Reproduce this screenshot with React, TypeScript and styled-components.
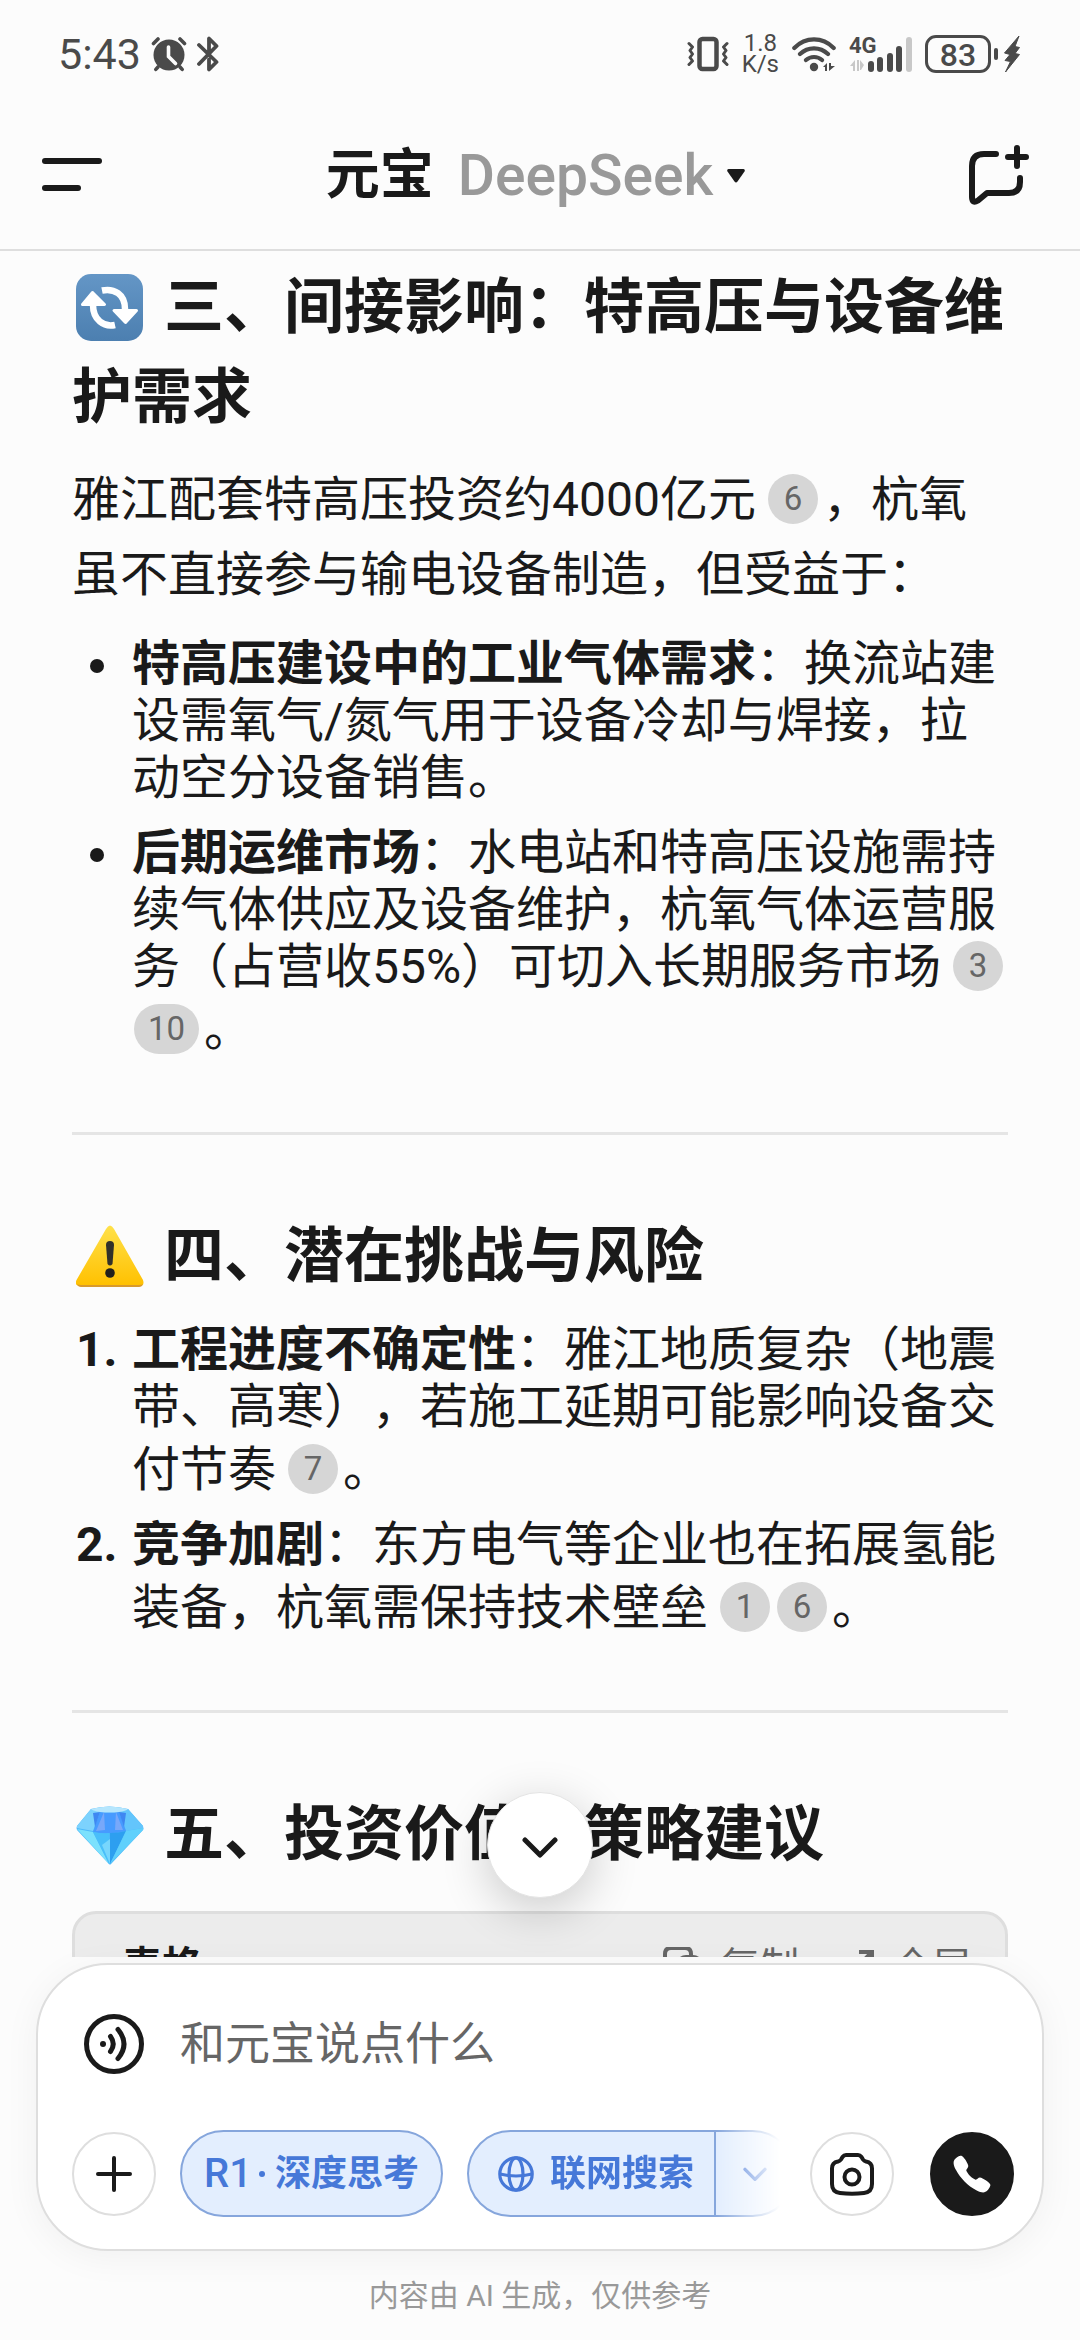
import React from 'react';
import styled, { createGlobalStyle, css } from 'styled-components';
import { IoCall } from 'react-icons/io5';

const ink = '#1a1a1a';
const statusInk = '#4a4a4a';
const blue = '#4678d8';
const fontStack = "Roboto, 'Noto Sans CJK SC', sans-serif";

const GlobalStyle = createGlobalStyle`
  * { box-sizing: border-box; }
  body {
    margin: 0;
    background: #fcfcfc;
    color: ${ink};
    font-family: ${fontStack};
    text-spacing-trim: space-all;
  }
  button, input { font-family: inherit; color: inherit; }
  button { padding: 0; border: 0; background: none; cursor: pointer; }
  svg { display: block; flex: none; }
`;

const Screen = styled.div`
  display: flex;
  flex-direction: column;
  height: 100vh;
  overflow: hidden;
`;

/* ---------- status bar ---------- */

const StatusBar = styled.div`
  display: flex;
  justify-content: space-between;
  align-items: center;
  flex: none;
  height: 100px;
  padding: 8px 60px 0 58px;
  color: ${statusInk};
`;

const StatusGroup = styled.div<{ $gap: number }>`
  display: flex;
  align-items: center;
  gap: ${(p) => p.$gap}px;
`;

const Clock = styled.time`
  font-size: 43px;
  line-height: 48px;
`;

const Speed = styled.div`
  font-size: 24px;
  line-height: 21px;
  text-align: center;
`;

const Cellular = styled.div`
  position: relative;
  width: 63px;
  height: 36px;
`;

const NetworkType = styled.span`
  position: absolute;
  top: 0;
  left: 0;
  font-size: 22px;
  font-weight: 700;
  line-height: 20px;
`;

const Battery = styled.div`
  display: flex;
  align-items: center;
  gap: 3px;
  &::after {
    content: '';
    width: 4px;
    height: 12px;
    border-radius: 2px;
    background: ${statusInk};
  }
`;

const BatteryLevel = styled.span`
  width: 66px;
  height: 38px;
  border: 3px solid ${statusInk};
  border-radius: 11px;
  font-size: 32px;
  font-weight: 500;
  line-height: 34px;
  text-align: center;
`;

/* ---------- header ---------- */

const Header = styled.header`
  display: flex;
  align-items: center;
  justify-content: space-between;
  flex: none;
  height: 151px;
  padding: 0 51px 0 42px;
  border-bottom: 2px solid #dedede;
`;

const IconButton = styled.button`
  display: grid;
  place-items: center;
  flex: none;
  width: 60px;
  height: 60px;
`;

const ModelPicker = styled.button`
  display: flex;
  align-items: center;
  padding-top: 3px;
  font-size: 54px;
  line-height: 72px;
`;

const Brand = styled.span`
  font-weight: 700;
`;

const Model = styled.span`
  margin: 0 14px 0 24px;
  color: #999;
  font-size: 57px;
  font-weight: 500;
`;

/* ---------- answer ---------- */

const Viewport = styled.div`
  position: relative;
  flex: 1;
  min-height: 0;
`;

const Answer = styled.main`
  height: 100%;
  overflow: hidden;
  padding: 12px 72px 0;
`;

const Heading = styled.h2`
  margin: 0;
  font-size: 60px;
  font-weight: 700;
  line-height: 90px;
`;

const Emoji = styled.span`
  display: inline-block;
  width: 68px;
  height: 68px;
  margin: 0 20px 0 4px;
  vertical-align: -14px;
`;

const Paragraph = styled.p`
  margin: 19px 0 23px;
  font-size: 48px;
  line-height: 75px;
`;

const listStyles = css`
  display: flex;
  flex-direction: column;
  gap: 18px;
  margin: 0;
  padding: 0;
  list-style: none;
  font-size: 48px;
  line-height: 57px;
`;

const BulletList = styled.ul`
  ${listStyles}
`;

const NumberList = styled.ol`
  ${listStyles}
  margin-top: 19px;
`;

const Item = styled.li`
  display: grid;
  grid-template-columns: 60px 1fr;
`;

const Bullet = styled.span`
  width: 14px;
  height: 14px;
  margin: 24px 0 0 18px;
  border-radius: 50%;
  background: ${ink};
`;

const Marker = styled.span`
  padding-left: 4px;
  font-weight: 700;
`;

const Rule = styled.hr`
  height: 3px;
  margin: 74px 0 77px;
  border: 0;
  background: #e5e5e5;
`;

const Cite = styled.button<{ $first?: boolean; $tight?: boolean }>`
  min-width: 50px;
  height: 50px;
  margin: ${(p) => (p.$tight ? 0 : 9)}px ${(p) => (p.$tight ? 3 : 5)}px 0 ${(p) => (p.$first ? 12 : 2)}px;
  padding: 0 14px;
  border-radius: 25px;
  background: #d6d6d6;
  color: #666;
  font-size: 33px;
  line-height: 50px;
  vertical-align: 6px;
`;

const TableCard = styled.section`
  margin-top: 31px;
  border: 3px solid #dedede;
  border-radius: 24px;
  background: #ececec;
`;

const TableBar = styled.div`
  display: flex;
  align-items: center;
  gap: 38px;
  height: 106px;
  padding: 0 34px 0 47px;
`;

const TableTitle = styled.strong`
  flex: 1;
  font-size: 40px;
  line-height: 60px;
`;

const TableAction = styled.button`
  display: flex;
  align-items: center;
  gap: 18px;
  color: #666;
  font-size: 39px;
  line-height: 60px;
`;

const ScrollDown = styled.button`
  position: absolute;
  bottom: 59px;
  left: 50%;
  display: grid;
  place-items: center;
  width: 106px;
  height: 106px;
  margin-left: -53px;
  padding-top: 4px;
  border: 1px solid #e4e4e4;
  border-radius: 50%;
  background: #fff;
  box-shadow: 0 12px 48px rgba(0, 0, 0, 0.2);
`;

/* ---------- composer ---------- */

const Dock = styled.footer`
  position: relative;
  flex: none;
  padding: 6px 36px 0;
  background: #fcfcfc;
`;

const Composer = styled.form`
  padding: 49px 28px 32px 34px;
  border: 2px solid #dedede;
  border-radius: 72px;
  background: #fff;
  box-shadow: 0 6px 36px rgba(0, 0, 0, 0.05);
`;

const InputRow = styled.div`
  display: flex;
  align-items: center;
  gap: 36px;
  height: 60px;
  margin: 0 0 56px 12px;
`;

const MessageInput = styled.input`
  flex: 1;
  min-width: 0;
  height: 60px;
  padding: 0;
  border: 0;
  outline: 0;
  background: none;
  font-size: 45px;
  &::placeholder { color: #666; opacity: 1; }
`;

const ToolRow = styled.div`
  display: flex;
  align-items: center;
`;

const RoundButton = styled.button<{ $dark?: boolean }>`
  display: grid;
  place-items: center;
  flex: none;
  width: 84px;
  height: 84px;
  border: 2px solid ${(p) => (p.$dark ? ink : '#dedede')};
  border-radius: 50%;
  background: ${(p) => (p.$dark ? ink : '#fff')};
  color: ${(p) => (p.$dark ? '#fff' : ink)};
`;

const Actions = styled.div`
  display: flex;
  flex: none;
  gap: 36px;
`;

const Chips = styled.div`
  display: flex;
  flex: 1;
  gap: 24px;
  min-width: 0;
  margin: 0 28px 0 24px;
  overflow: hidden;
  mask-image: linear-gradient(to right, #000 calc(100% - 66px), transparent calc(100% - 2px));
`;

const chipStyles = css`
  display: flex;
  flex: none;
  height: 87px;
  border: 2px solid #86a6dc;
  border-radius: 44px;
  background: #e3eefe;
  color: ${blue};
`;

const chipText = css`
  align-items: center;
  font-size: 36px;
  font-weight: 700;
  line-height: 54px;
`;

const Chip = styled.button`
  ${chipStyles}
  ${chipText}
  padding: 0 22px;
`;

const ModelTag = styled.span`
  font-size: 40px;
  font-weight: 500;
`;

const Dot = styled.span`
  width: 6px;
  height: 6px;
  margin: 0 10px 0 7px;
  border-radius: 50%;
  background: ${blue};
`;

const SplitChip = styled.div`
  ${chipStyles}
`;

const SplitMain = styled.button`
  ${chipText}
  display: flex;
  gap: 16px;
  padding: 0 20px 0 29px;
  border-right: 2px solid #86a6dc;
`;

const SplitMenu = styled.button`
  display: grid;
  place-items: center;
  width: 78px;
`;

const Notice = styled.p`
  margin: 0;
  padding: 23px 0 22px;
  color: #999;
  font-size: 30px;
  line-height: 44px;
  text-align: center;
`;

/* ---------- drawings ---------- */

const AlarmIcon = () => (
  <svg width="36" height="36" viewBox="0 0 36 36" fill="none" stroke={statusInk} strokeLinecap="round">
    <circle cx="18" cy="19" r="15.5" fill={statusInk} stroke="none" />
    <path d="M2.5 7.5 7 3M33.500 7.500 29 3" strokeWidth="3.600" />
    <path d="M7 31 4.800 33.400M29 31l2.200 2.400" strokeWidth="3.600" />
    <path d="M17.500 11v9.500l7 7" stroke="#fcfcfc" strokeWidth="3.600" />
  </svg>
);

const BluetoothIcon = () => (
  <svg width="22" height="36" viewBox="0 0 22 36" fill="none" stroke={statusInk} strokeWidth="3.800" strokeLinecap="round" strokeLinejoin="round">
    <path d="M2 9 19.500 26 12 33.500V23.500M2 28 19.500 10 12 2.500V17" />
  </svg>
);

const VibrateIcon = () => (
  <svg width="42" height="36" viewBox="0 0 42 36" fill="none" stroke={statusInk} strokeLinejoin="round" strokeLinecap="round">
    <rect x="12.500" y="3" width="17" height="30" rx="3" strokeWidth="4.500" />
    <path d="M2 7.500l3.500 3.500-2.500 3.500 2.500 3.500-2.500 3.500 2.500 3.500L2 28.500M40 7.500 36.500 11l2.500 3.500-2.500 3.500 2.500 3.500-2.500 3.500 3.500 3.500" strokeWidth="3" />
  </svg>
);

const WifiIcon = () => (
  <svg width="44" height="36" viewBox="0 0 44 36" fill="none" stroke={statusInk} strokeLinecap="round" strokeWidth="4.200">
    <path d="M2.300 12C13.500.600 30.500.600 41.700 12M8 18c8-7.600 20-7.600 28 0M14 24c4.600-4 11.400-4 16 0" />
    <circle cx="22" cy="31" r="4.200" fill={statusInk} stroke="none" />
    <path d="M31 31l4-4v8h-2v-4zM37 27v8l6-5h-4v-3z" fill={statusInk} stroke="none" />
  </svg>
);

const SignalIcon = () => (
  <svg width="63" height="36" viewBox="0 0 63 36" fill={statusInk}>
    <path d="M1 30l5-6v11H4v-5zM8 24v11h2V24zM11 24l4 5-3 5h-1z" fill="#c8c8c8" />
    <rect x="19" y="25" width="6" height="11" rx="3" />
    <rect x="28" y="21" width="6" height="15" rx="3" />
    <rect x="38" y="17" width="6" height="19" rx="3" />
    <rect x="47" y="10" width="6" height="26" rx="3" />
    <rect x="57" y="1" width="6" height="35" rx="3" fill="#c8c8c8" />
  </svg>
);

const BoltIcon = () => (
  <svg width="16" height="38" viewBox="0 0 16 38" fill={statusInk} stroke={statusInk} strokeLinejoin="round">
    <path d="M15 1 0.500 18l5.500 1.500-5 6 5.500 1L1.500 37 15.500 19.500 11 18.500l4.500-6-4.500-1z" />
  </svg>
);

const MenuIcon = () => (
  <svg width="60" height="34" viewBox="0 0 60 34" fill={ink}>
    <rect width="60" height="6" rx="3" />
    <rect y="27" width="39" height="6" rx="3" />
  </svg>
);

const CaretIcon = () => (
  <svg width="18" height="14" viewBox="0 0 18 14" fill={ink}>
    <path d="M1.500 0h15q2 .500 1 2.500l-7 10q-1.500 2-3 0l-7-10Q-.500.500 1.500 0z" />
  </svg>
);

const NewChatIcon = () => (
  <svg width="60" height="60" viewBox="0 0 60 60" fill="none" stroke={ink} strokeWidth="6" strokeLinecap="round" strokeLinejoin="round">
    <path d="M27 9H15Q3 9 3 21v31q0 7 6 3.500L18 48h22q11 0 11-11v-4M48 3v18M39 12h18" />
  </svg>
);

const SyncEmoji = () => (
  <svg width="68" height="68" viewBox="0 0 68 68">
    <defs>
      <linearGradient id="sync" x1="0" y1="0" x2="0" y2="1">
        <stop offset="0" stopColor="#6496c6" />
        <stop offset="1" stopColor="#4c7fb0" />
      </linearGradient>
    </defs>
    <rect width="67" height="67" rx="15" fill="url(#sync)" />
    <path d="M26 16.500C38 14 49 20 49 35M17 31c0 15 11 22.500 22 20" fill="none" stroke="#fff" strokeWidth="6.500" />
    <path d="M16.500 18.500 28.500 30.500h-22zM49.500 48.500 38 36.500h22.500z" fill="#fff" stroke="#fff" strokeWidth="3" strokeLinejoin="round" />
  </svg>
);

const WarningEmoji = () => (
  <svg width="68" height="68" viewBox="0 0 68 68">
    <defs>
      <linearGradient id="warn" x1="0" y1="0" x2="0" y2="1">
        <stop offset="0" stopColor="#ffe14a" />
        <stop offset="1" stopColor="#ffc000" />
      </linearGradient>
    </defs>
    <path d="M30 6q4-7 8 0l29 51q2 6-4 6H4q-6 0-3.500-6z" fill="url(#warn)" />
    <path d="M1 61q1 3 4 3h58q3 0 4-3-1 1-4 1H5q-3 0-4-1z" fill="#d89a2c" />
    <path d="M30 22q0-4 4-4t4 4l-1.500 19q-2.500 3-5 0z" fill="#33312a" />
    <circle cx="34" cy="50" r="4.800" fill="#22201c" />
  </svg>
);

const GemEmoji = () => (
  <svg width="68" height="68" viewBox="0 0 68 68">
    <path d="M15 8Q33 3 52 8L67 25q1 3 0 4L35 63q-1 1-2 0L1 29q-1-2 0-4z" fill="#4cb8fa" />
    <path d="M15 8l9 3-7 19L1 27v-2z" fill="#7cd2fd" />
    <path d="M52 8l-9 3 7 19 17-3v-2z" fill="#63c5fc" />
    <path d="M24 11q9 1 19 0l7 19q-16 4-33 1z" fill="#479bff" />
    <path d="M17 12l7-1-5 15zM43 11l7 1-2 14z" fill="#3f87f2" />
    <path d="M28 11l1 18-9 1zM40 11l-1 18 8 0z" fill="#78a8fa" />
    <path d="M15 8Q33 3 52 8q-2 2-9 3-9 1-19 0-7-1-9-3z" fill="#b5e6fd" />
    <path d="M1 28l16 3 16 32z" fill="#7be1fd" />
    <path d="M17 31q8 2 16 1v31z" fill="#49bffa" />
    <path d="M34 32q9 0 16-2L34 63z" fill="#2d9ff0" />
    <path d="M50 30l17-3v2L34 63z" fill="#5fd0fc" />
    <path d="M26 44l8-6v25z" fill="#77d6fd" />
  </svg>
);

const CopyIcon = () => (
  <svg width="40" height="40" viewBox="0 0 40 40" fill="none" stroke="#666" strokeWidth="4">
    <path d="M10 28H8q-6 0-6-6V7q0-6 6-6h14q6 0 6 6v3" />
    <rect x="15" y="10" width="23" height="26" rx="8" />
  </svg>
);

const ExpandIcon = () => (
  <svg width="38" height="38" viewBox="0 0 38 38" fill="none" stroke="#666" strokeWidth="4">
    <path d="M22 4h13v13M35 4 22 17M16 34H3V21M3 34l13-13" />
  </svg>
);

const ChevronDown = ({ size, color, weight }: { size: number; color: string; weight: number }) => (
  <svg width={size} height={size} viewBox="0 0 36 36" fill="none" stroke={color} strokeWidth={weight} strokeLinecap="round" strokeLinejoin="round">
    <path d="M3 11l15 15 15-15" />
  </svg>
);

const VoiceIcon = () => (
  <svg width="60" height="60" viewBox="0 0 60 60" fill="none" stroke={ink} strokeWidth="5" strokeLinecap="round">
    <circle cx="30" cy="30" r="27.500" />
    <circle cx="19" cy="30" r="3" fill={ink} stroke="none" />
    <path d="M26.500 22.500q5.500 7.500 0 15M34 15.500q12 14.500 0 29" />
  </svg>
);

const PlusIcon = () => (
  <svg width="36" height="36" viewBox="0 0 36 36" stroke={ink} strokeWidth="4" strokeLinecap="round">
    <path d="M18 2v32M2 18h32" />
  </svg>
);

const GlobeIcon = () => (
  <svg width="36" height="36" viewBox="0 0 36 36" fill="none" stroke={blue} strokeWidth="3.200">
    <circle cx="18" cy="18" r="16.200" />
    <ellipse cx="18" cy="18" rx="7" ry="16.200" />
    <path d="M2 18q16 4 32 0" />
  </svg>
);

const CameraIcon = () => (
  <svg width="44" height="44" viewBox="0 0 44 44" fill="none" stroke={ink} strokeWidth="4" strokeLinejoin="round">
    <path d="M16 3h12q2 0 3.500 2l1.500 2.500q1 1.500 3 2 6 1 6 7V32q0 8-8 9-12 1.500-24 0-8-1-8-9V16.500q0-6 6-7 2-.500 3-2L12.500 5Q14 3 16 3z" />
    <circle cx="22" cy="25" r="7.500" />
  </svg>
);

export default function App() {
  return (
    <Screen>
      <GlobalStyle />
      <StatusBar>
        <StatusGroup $gap={10}>
          <Clock>5:43</Clock>
          <AlarmIcon />
          <BluetoothIcon />
        </StatusGroup>
        <StatusGroup $gap={13}>
          <VibrateIcon />
          <Speed>1.8<br />K/s</Speed>
          <WifiIcon />
          <Cellular>
            <NetworkType>4G</NetworkType>
            <SignalIcon />
          </Cellular>
          <StatusGroup $gap={6}>
            <Battery><BatteryLevel>83</BatteryLevel></Battery>
            <BoltIcon />
          </StatusGroup>
        </StatusGroup>
      </StatusBar>

      <Header>
        <IconButton aria-label="菜单"><MenuIcon /></IconButton>
        <ModelPicker>
          <Brand>元宝</Brand>
          <Model>DeepSeek</Model>
          <CaretIcon />
        </ModelPicker>
        <IconButton aria-label="新建对话"><NewChatIcon /></IconButton>
      </Header>

      <Viewport>
        <Answer>
          <Heading><Emoji><SyncEmoji /></Emoji>三、间接影响：特高压与设备维护需求</Heading>
          <Paragraph>
            雅江配套特高压投资约4000亿元<Cite $first>6</Cite>，杭氧虽不直接参与输电设备制造，但受益于：
          </Paragraph>
          <BulletList>
            <Item>
              <Bullet />
              <div><strong>特高压建设中的工业气体需求</strong>：换流站建设需氧气/氮气用于设备冷却与焊接，拉动空分设备销售。</div>
            </Item>
            <Item>
              <Bullet />
              <div>
                <strong>后期运维市场</strong>：水电站和特高压设施需持续气体供应及设备维护，杭氧气体运营服务（占营收55%）可切入长期服务市场<Cite $first $tight>3</Cite><Cite>10</Cite>。
              </div>
            </Item>
          </BulletList>
          <Rule />
          <Heading><Emoji><WarningEmoji /></Emoji>四、潜在挑战与风险</Heading>
          <NumberList>
            <Item>
              <Marker>1.</Marker>
              <div><strong>工程进度不确定性</strong>：雅江地质复杂（地震带、高寒），若施工延期可能影响设备交付节奏<Cite $first>7</Cite>。</div>
            </Item>
            <Item>
              <Marker>2.</Marker>
              <div><strong>竞争加剧</strong>：东方电气等企业也在拓展氢能装备，杭氧需保持技术壁垒<Cite $first>1</Cite><Cite>6</Cite>。</div>
            </Item>
          </NumberList>
          <Rule />
          <Heading><Emoji><GemEmoji /></Emoji>五、投资价值与策略建议</Heading>
          <TableCard>
            <TableBar>
              <TableTitle>表格</TableTitle>
              <TableAction><CopyIcon />复制</TableAction>
              <TableAction><ExpandIcon />全屏</TableAction>
            </TableBar>
          </TableCard>
        </Answer>
        <ScrollDown aria-label="回到底部"><ChevronDown size={36} color={ink} weight={5} /></ScrollDown>
      </Viewport>

      <Dock>
        <Composer onSubmit={(e) => e.preventDefault()}>
          <InputRow>
            <IconButton type="button" aria-label="语音输入"><VoiceIcon /></IconButton>
            <MessageInput aria-label="消息" placeholder="和元宝说点什么" />
          </InputRow>
          <ToolRow>
            <RoundButton type="button" aria-label="添加"><PlusIcon /></RoundButton>
            <Chips>
              <Chip type="button"><ModelTag>R1</ModelTag><Dot />深度思考</Chip>
              <SplitChip>
                <SplitMain type="button"><GlobeIcon />联网搜索</SplitMain>
                <SplitMenu type="button" aria-label="搜索选项"><ChevronDown size={24} color={blue} weight={5} /></SplitMenu>
              </SplitChip>
            </Chips>
            <Actions>
              <RoundButton type="button" aria-label="拍照"><CameraIcon /></RoundButton>
              <RoundButton type="button" aria-label="语音通话" $dark><IoCall size={42} /></RoundButton>
            </Actions>
          </ToolRow>
        </Composer>
        <Notice>内容由 AI 生成，仅供参考</Notice>
      </Dock>
    </Screen>
  );
}
